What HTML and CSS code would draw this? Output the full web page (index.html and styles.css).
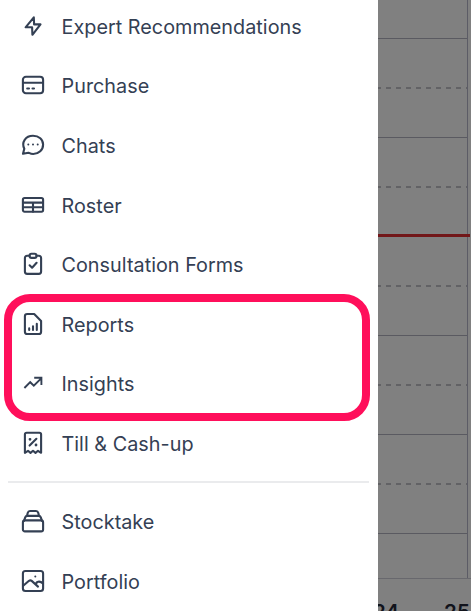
FILE: index.html
```html
<!DOCTYPE html>
<html lang="en">
<head>
<meta charset="utf-8">
<title>Menu</title>
<link rel="stylesheet" href="styles.css">
</head>
<body>
<div class="app">
  <nav class="drawer">
    <a class="item"><svg class="icon" viewBox="0 0 26 26"><path d="M13.8 4.4 5.6 14.3H12.1L12.4 21.8 20.5 11.4H14.1Z"/></svg><span>Expert Recommendations</span></a>
    <a class="item"><svg class="icon" viewBox="0 0 26 26"><rect x="2.9" y="4.8" width="20.2" height="16.4" rx="3"/><path d="M3 10.8H23M7.2 16.5H9M12.5 16.5H14"/></svg><span>Purchase</span></a>
    <a class="item"><svg class="icon" viewBox="0 0 26 26"><path d="M3 21.8 4.3 16.8C1.2 10.2 5.5 3.8 13 3.8 19 3.8 23.1 7.6 23.1 12.5 23.1 18 18.8 22 13.2 22 11 22 9.8 21.3 8.5 20.7Z"/><path class="dots" d="M8.3 12.6h.01M13 12.6h.01M17.7 12.6h.01"/></svg><span>Chats</span></a>
    <a class="item"><svg class="icon" viewBox="0 0 26 26"><rect x="2.9" y="6" width="20.2" height="13.8" rx="1.7"/><path d="M3 10.6H23M3 15.2H23M13 10.6V19.8"/></svg><span>Roster</span></a>
    <a class="item"><svg class="icon" viewBox="0 0 26 26"><path d="M9.5 4.8H7.2Q4.9 4.8 4.9 7.1V20.6Q4.9 22.9 7.2 22.9H18.8Q21.1 22.9 21.1 20.6V7.1Q21.1 4.8 18.8 4.8H16.5"/><rect x="9.6" y="2.7" width="6.9" height="4.2" rx="1.8"/><path d="M9.6 14.3 12.1 16.7 16.6 11.8"/></svg><span>Consultation Forms</span></a>
    <a class="item"><svg class="icon" viewBox="0 0 26 26"><path d="M7.2 3H14.2L21.1 10V20.7Q21.1 23 18.8 23H7.2Q4.9 23 4.9 20.7V5.3Q4.9 3 7.2 3Z"/><path d="M9.2 17.4V18.9M13 15.2V18.9M16.8 12.8V18.9"/></svg><span>Reports</span></a>
    <a class="item"><svg class="icon trend" viewBox="0 0 26 26"><path d="M4.4 18 10.2 12.2 13.8 15.7 21.2 8.3M14.2 7.8H21.4V15"/></svg><span>Insights</span></a>
    <a class="item"><svg class="icon" viewBox="0 0 26 26"><path d="M4.9 22.8V4.5Q4.9 2.8 6.6 2.8H19.4Q21.1 2.8 21.1 4.5V22.8L18 20.8 15.5 22.9 13 20.8 10.5 22.9 8 20.8Z"/><path d="M9.6 15.6 16.4 8.8"/><path class="marks" d="M10 9.3h.01M16 15h.01"/></svg><span>Till &amp; Cash-up</span></a>
    <hr class="divider">
    <a class="item"><svg class="icon" viewBox="0 0 26 26"><rect x="2.9" y="12.4" width="20.2" height="11" rx="2"/><path d="M4 12.8 5.2 9.4Q5.7 7.9 7.2 7.9H18.8Q20.3 7.9 20.8 9.4L22 12.8M7 7.7 7.7 4.9Q8.2 3 10 3H16Q17.8 3 18.3 4.9L19 7.7"/></svg><span>Stocktake</span></a>
    <a class="item"><svg class="icon" viewBox="0 0 26 26"><rect x="2.9" y="3" width="20.2" height="20" rx="2.5"/><path d="M3.2 17.8 9 12.8Q10.4 11.8 11.7 12.9L18 18.6M16 16.8C15.6 13.5 19.8 12.3 23 15.6"/><path class="dots" d="M15.3 8.4h.01"/></svg><span>Portfolio</span></a>
    <div class="highlight"></div>
  </nav>
  <main class="calendar">
    <div class="grid">
      <div class="slot first"></div>
      <div class="slot half"></div><div class="slot"></div>
      <div class="slot half"></div><div class="slot now"></div>
      <div class="slot half"></div><div class="slot"></div>
      <div class="slot half"></div><div class="slot"></div>
      <div class="slot half"></div><div class="slot"></div>
    </div>
    <div class="dates"><span>24</span><span>25</span></div>
  </main>
</div>
</body>
</html>
```
FILE: styles.css
```css
* { box-sizing: border-box; }
body { margin: 0; background: #fff; font-family: Inter, sans-serif; }
.app { display: flex; width: 471px; height: 611px; overflow: hidden; }
.drawer { position: relative; flex: 0 0 378px; padding: 0 9px 0 8px; background: #fff; margin-top: -4px; }
.item {
  display: flex; align-items: center; gap: 15.5px; height: 59.6px; padding-left: 12px;
  color: #344054; font-size: 19.8px; line-height: 28px; font-weight: 370;
  letter-spacing: 0.03px; white-space: nowrap;
}
.item span { padding-top: 2px; }
.icon { flex: none; width: 26px; height: 26px; fill: none; stroke: #344054; stroke-width: 2.1; stroke-linecap: round; stroke-linejoin: round; }
.icon .dots { stroke-width: 2; }
.icon .marks { stroke-width: 2.8; }
.icon.trend { stroke-width: 1.9; stroke-linecap: butt; stroke-linejoin: miter; }
.divider { height: 2px; border: 0; margin: 8.6px 0 8.1px; background: #eaebed; }
.highlight { position: absolute; left: 4px; top: 298px; width: 366px; height: 127px; border: 8px solid #ff0f5b; border-radius: 26px; }
.calendar { flex: 1; overflow: hidden; background: #808080; }
.grid { width: 90px; height: 578px; border-right: 1px solid #5c5c66; }
.slot { height: 49.5px; border-bottom: 1px solid #5a5a61; }
.slot.first { height: 38.5px; }
.slot.half {
  height: 50.5px;
  margin-bottom: -1px;
  border: 0;
  background: repeating-linear-gradient(90deg, #626265 0 5px, transparent 5px 10px) -2px 100% / 100px 2px no-repeat;
}
.slot.now { position: relative; border: 0; }
.slot.now::after { content: ""; position: absolute; left: 0; right: -3px; bottom: 0; height: 3px; background: #721719; }
.dates { display: flex; gap: 45px; margin-left: -5px; padding-top: 20px; border-top: 1px solid #68686d; color: #11131b; font-size: 20.5px; line-height: 26px; font-weight: 600; white-space: nowrap; }
```
